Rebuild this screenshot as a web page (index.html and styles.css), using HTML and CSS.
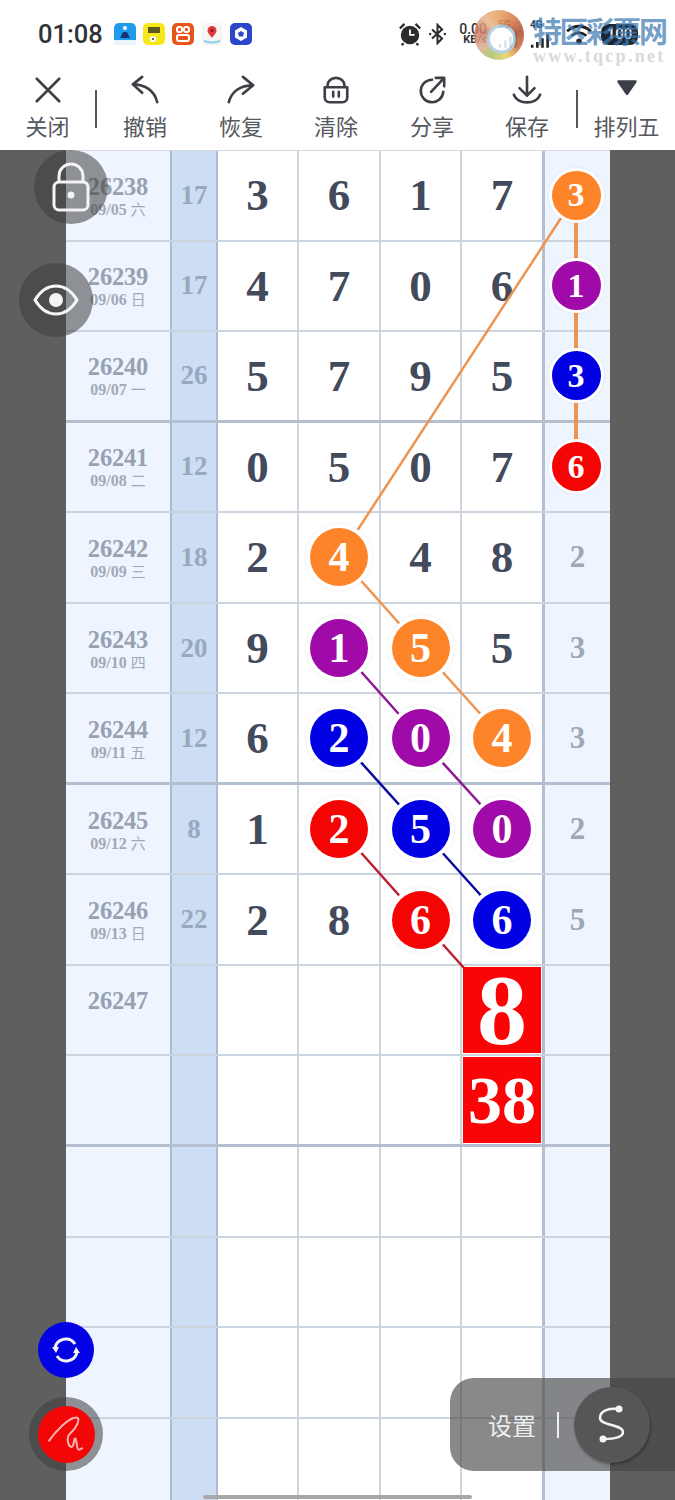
FILE: index.html
```html
<!DOCTYPE html>
<html lang="zh">

<head>
    <meta charset="UTF-8">
    <meta name="viewport" content="width=device-width, initial-scale=1.0">
    <title>排列五</title>
    <link rel="stylesheet" href="styles.css">
</head>

<body>
    <div class="status">
        <span class="time">01:08</span>
        <div class="apps">
            <svg class="app" viewBox="0 0 22 22"><rect width="22" height="22" rx="5" fill="#1e9bea"/><circle cx="11" cy="5" r="2" fill="#fff"/><path d="M6 15l3-6h4l3 6z" fill="#16357c"/><rect y="17" width="22" height="5" fill="#eaf5fb"/></svg>
            <svg class="app" viewBox="0 0 22 22"><rect width="22" height="22" rx="5" fill="#f7e81c"/><rect x="5" y="4" width="12" height="6" fill="#5d5a20"/><circle cx="10" cy="16" r="3" fill="#fff"/><circle cx="10" cy="16" r="1" fill="#333"/></svg>
            <svg class="app" viewBox="0 0 22 22"><rect width="22" height="22" rx="5" fill="#e7541c"/><rect x="5" y="4" width="5" height="5" rx="2" fill="none" stroke="#fff" stroke-width="2"/><rect x="12" y="4" width="5" height="5" rx="2" fill="none" stroke="#fff" stroke-width="2"/><rect x="5" y="12" width="12" height="6" rx="2" fill="none" stroke="#fff" stroke-width="2"/></svg>
            <svg class="app" viewBox="0 0 22 22"><rect width="22" height="22" rx="5" fill="#f4f6f6"/><path d="M11 15C8 11 6.500 9.500 6.500 7.500a4.500 4.500 0 0 1 9 0C15.500 9.500 14 11 11 15z" fill="#e23a3a"/><circle cx="11" cy="7.500" r="1.500" fill="#7d1d1d"/><path d="M3 18q8 3 16 0" stroke="#8fd0e8" stroke-width="2" fill="none"/></svg>
            <svg class="app" viewBox="0 0 22 22"><rect width="22" height="22" rx="5" fill="#2b46c8"/><path d="M11 4l6 3.500v7L11 18l-6-3.500v-7z" fill="#fff"/><path d="M11 8l3 2-1 3.500H9L8 10z" fill="#2b46c8"/></svg>
        </div>
        <div class="sys">
            <svg class="alarm" viewBox="0 0 26 26"><circle cx="13" cy="14" r="10" fill="#2c2c2c"/><path d="M2 7l5-5M24 7l-5-5M6 23l-2 2M20 23l2 2" stroke="#2c2c2c" stroke-width="2.500"/><path d="M13 8v6h5" stroke="#fff" stroke-width="2" fill="none"/></svg>
            <svg class="bt" viewBox="0 0 20 24"><path d="M4 7l11 10-5 5V2l5 5L4 17" stroke="#2c2c2c" stroke-width="2.200" fill="none"/><circle cx="2" cy="12" r="1.300" fill="#2c2c2c"/><circle cx="18" cy="12" r="1.300" fill="#2c2c2c"/></svg>
            <div class="speed"><span>0.00</span><b>KB/s</b></div>
            <div class="net">
                <span>5G</span>
                <svg viewBox="0 0 30 24"><path d="M3 24v-5M10 24V14M17 24V9M24 24V4" stroke="#1c3f63" stroke-width="3.500"/></svg>
            </div>
            <div class="net">
                <span>4G</span>
                <svg viewBox="0 0 30 24"><path d="M3 24v-4M10 24v-8M17 24V11M24 24V6" stroke="#222" stroke-width="3.500"/></svg>
            </div>
            <svg class="wifi" viewBox="0 0 30 24"><path d="M2 9q13-11 26 0M7 14q8-7 16 0" stroke="#222" stroke-width="3" fill="none"/><circle cx="15" cy="20" r="3" fill="#222"/></svg>
            <span class="battery">100</span>
        </div>
    </div>

    <div class="watermark">
        <div class="logo"></div>
        <div class="mark-text">
            <span class="mark-name">特区彩票网</span>
            <span class="mark-url">www.tqcp.net</span>
        </div>
    </div>

    <div class="toolbar">
        <div class="tool">
            <svg viewBox="0 0 32 32"><path d="M4 4l24 24M28 4L4 28"/></svg>
            <span>关闭</span>
        </div>
        <div class="sep"></div>
        <div class="tool">
            <svg viewBox="0 0 32 32"><path d="M13 2L3 10l10 9M3 10c12 0 23 6 26 19"/></svg>
            <span>撤销</span>
        </div>
        <div class="tool">
            <svg viewBox="0 0 32 32"><path d="M18 2l11 9-11 9M29 11C16 11 6 17 3 29"/></svg>
            <span>恢复</span>
        </div>
        <div class="tool">
            <svg viewBox="0 0 32 32"><path d="M4 13h24v11a5 5 0 0 1-5 5H9a5 5 0 0 1-5-5zM7 13V11a9 8 0 0 1 18 0v2M13 18v5M19 18v5"/></svg>
            <span>清除</span>
        </div>
        <div class="tool">
            <svg viewBox="0 0 32 32"><path d="M16 5A12 12 0 1 0 28 18M15 18L29 3M20 3h9v9"/></svg>
            <span>分享</span>
        </div>
        <div class="tool">
            <svg viewBox="0 0 32 32"><path d="M16 2v20M8 14l8 8 8-8M2 21c4 11 24 11 28 0"/></svg>
            <span>保存</span>
        </div>
        <div class="sep sep-end"></div>
        <div class="tool">
            <svg viewBox="0 0 32 32"><path class="solid" d="M7 7h18l-9 13z"/></svg>
            <span>排列五</span>
        </div>
    </div>

    <div class="sheet">
        <div class="board">
            <svg class="links" viewBox="0 0 544 1350">
                <g stroke="#ee9350" stroke-width="2.500">
                    <path d="M510 45L274 407M274 407L355 498M355 498L437 589"/>
                    <path stroke-width="4" d="M510 45V317"/>
                </g>
                <path stroke="#8c1a90" stroke-width="2.500" d="M274 498L355 589L437 679"/>
                <path stroke="#0a0a9e" stroke-width="2.500" d="M274 589L355 679L437 770"/>
                <path stroke="#bb2030" stroke-width="2.500" d="M274 679L355 770L398 818"/>
            </svg>

            <div class="row">
                <div class="date"><b>26238</b><small>09/05 <i>六</i></small></div>
                <div class="sum">17</div>
                <div class="num">3</div><div class="num">6</div><div class="num">1</div><div class="num">7</div>
                <div class="gap"><span class="ball small orange">3</span></div>
            </div>
            <div class="row">
                <div class="date"><b>26239</b><small>09/06 <i>日</i></small></div>
                <div class="sum">17</div>
                <div class="num">4</div><div class="num">7</div><div class="num">0</div><div class="num">6</div>
                <div class="gap"><span class="ball small purple">1</span></div>
            </div>
            <div class="row thick">
                <div class="date"><b>26240</b><small>09/07 <i>一</i></small></div>
                <div class="sum">26</div>
                <div class="num">5</div><div class="num">7</div><div class="num">9</div><div class="num">5</div>
                <div class="gap"><span class="ball small blue">3</span></div>
            </div>
            <div class="row">
                <div class="date"><b>26241</b><small>09/08 <i>二</i></small></div>
                <div class="sum">12</div>
                <div class="num">0</div><div class="num">5</div><div class="num">0</div><div class="num">7</div>
                <div class="gap"><span class="ball small red">6</span></div>
            </div>
            <div class="row">
                <div class="date"><b>26242</b><small>09/09 <i>三</i></small></div>
                <div class="sum">18</div>
                <div class="num">2</div><div class="num"><span class="ball orange">4</span></div><div class="num">4</div><div class="num">8</div>
                <div class="gap">2</div>
            </div>
            <div class="row">
                <div class="date"><b>26243</b><small>09/10 <i>四</i></small></div>
                <div class="sum">20</div>
                <div class="num">9</div><div class="num"><span class="ball purple">1</span></div><div class="num"><span class="ball orange">5</span></div><div class="num">5</div>
                <div class="gap">3</div>
            </div>
            <div class="row thick">
                <div class="date"><b>26244</b><small>09/11 <i>五</i></small></div>
                <div class="sum">12</div>
                <div class="num">6</div><div class="num"><span class="ball blue">2</span></div><div class="num"><span class="ball purple">0</span></div><div class="num"><span class="ball orange">4</span></div>
                <div class="gap">3</div>
            </div>
            <div class="row">
                <div class="date"><b>26245</b><small>09/12 <i>六</i></small></div>
                <div class="sum">8</div>
                <div class="num">1</div><div class="num"><span class="ball red">2</span></div><div class="num"><span class="ball blue">5</span></div><div class="num"><span class="ball purple">0</span></div>
                <div class="gap">2</div>
            </div>
            <div class="row">
                <div class="date"><b>26246</b><small>09/13 <i>日</i></small></div>
                <div class="sum">22</div>
                <div class="num">2</div><div class="num">8</div><div class="num"><span class="ball red">6</span></div><div class="num"><span class="ball blue">6</span></div>
                <div class="gap">5</div>
            </div>
            <div class="row">
                <div class="date next"><b>26247</b></div>
                <div class="sum"></div>
                <div class="num"></div><div class="num"></div><div class="num"></div><div class="num"><span class="tile big">8</span></div>
                <div class="gap"></div>
            </div>
            <div class="row thick">
                <div class="date"></div>
                <div class="sum"></div>
                <div class="num"></div><div class="num"></div><div class="num"></div><div class="num"><span class="tile">38</span></div>
                <div class="gap"></div>
            </div>
            <div class="row">
                <div class="date"></div><div class="sum"></div><div class="num"></div><div class="num"></div><div class="num"></div><div class="num"></div><div class="gap"></div>
            </div>
            <div class="row">
                <div class="date"></div><div class="sum"></div><div class="num"></div><div class="num"></div><div class="num"></div><div class="num"></div><div class="gap"></div>
            </div>
            <div class="row">
                <div class="date"></div><div class="sum"></div><div class="num"></div><div class="num"></div><div class="num"></div><div class="num"></div><div class="gap"></div>
            </div>
            <div class="row">
                <div class="date"></div><div class="sum"></div><div class="num"></div><div class="num"></div><div class="num"></div><div class="num"></div><div class="gap"></div>
            </div>
        </div>
    </div>

    <div class="float lock">
        <svg viewBox="0 0 38 50"><rect x="2" y="20" width="34" height="28" rx="5"/><path d="M7 20v-6a12 12 0 0 1 24 0v6"/><circle class="dot" cx="19" cy="33" r="3.500"/></svg>
    </div>
    <div class="float eye">
        <svg viewBox="0 0 46 32"><path d="M2 16C8 6 15 2 23 2s15 4 21 14c-6 10-13 14-21 14S8 26 2 16z"/><circle class="dot" cx="23" cy="16" r="7"/></svg>
    </div>
    <div class="float refresh">
        <svg viewBox="0 0 30 30"><path d="M4 13a11 11 0 0 1 20-4M26 17a11 11 0 0 1-20 4"/><path class="dot" d="M1 12l7 0-3 6zM29 18l-7 0 3-6z"/></svg>
    </div>
    <div class="float pen">
        <div class="pen-dot">
            <svg viewBox="0 0 50 50"><path d="M6 33C14 22 28 7 36 7C42 7 36 19 30 24C24 29 28 39 31 39C34 39 33 30 35 30C37 30 36 42 39 42C41 42 42 41 43 40"/></svg>
        </div>
    </div>

    <div class="settings">
        <span class="set-text">设置</span>
        <span class="set-sep"></span>
        <div class="set-btn">
            <svg viewBox="0 0 28 40"><path d="M21 4C12 3 2 5 2 13C2 21 25 19 25 27C25 33 14 34 5 34"/><circle class="dot" cx="21" cy="4" r="3.500"/><circle class="dot" cx="5" cy="34" r="3.500"/></svg>
        </div>
    </div>

    <div class="home-bar"></div>
</body>

</html>
```

FILE: styles.css
```css
* {
    box-sizing: border-box;
}

html,
body {
    margin: 0;
    height: 1500px;
    overflow: hidden;
    background-color: #fff;
    font-family: "Noto Sans CJK SC", "Noto Sans", sans-serif;
}

body {
    position: relative;
}

/* status bar */
.status {
    height: 68px;
    display: flex;
    align-items: center;
    padding: 0 37px 0 38px;
}

.time {
    font-family: Roboto, sans-serif;
    font-weight: 500;
    font-size: 25.5px;
    color: #2f3237;
}

.apps {
    display: flex;
    gap: 7px;
    margin-left: 11px;
}

.app {
    width: 22px;
    height: 22px;
}

.sys {
    margin-left: auto;
    display: flex;
    align-items: center;
}

.alarm {
    width: 24px;
    height: 24px;
}

.bt {
    width: 19px;
    height: 22px;
    margin-left: 6px;
}

.speed {
    display: flex;
    flex-direction: column;
    align-items: flex-end;
    margin-left: 8px;
    width: 32px;
    font-family: Roboto, sans-serif;
    line-height: 10px;
    color: #333;
}

.speed span {
    font-size: 14px;
    font-weight: 500;
}

.speed b {
    font-size: 11px;
    margin-top: 1px;
}

.net {
    width: 22px;
    margin-left: 11px;
    display: flex;
    flex-direction: column;
    font-family: Roboto, sans-serif;
    font-size: 10px;
    font-weight: 700;
    line-height: 10px;
    color: #1c3f63;
}

.net + .net {
    margin-left: 10px;
}

.net svg {
    width: 22px;
    height: 18px;
}

.wifi {
    width: 30px;
    height: 22px;
    margin-left: 12px;
}

.battery {
    width: 37px;
    height: 21px;
    margin-left: 7px;
    border-radius: 8px;
    background-color: #1d2630;
    color: #fff;
    text-align: center;
    font-family: Roboto, sans-serif;
    font-size: 15px;
    font-weight: 500;
    line-height: 21px;
}

/* site watermark */
.watermark {
    position: absolute;
    left: 474px;
    top: 10px;
    display: flex;
    pointer-events: none;
}

.logo {
    width: 50px;
    height: 50px;
    border-radius: 50%;
    opacity: .85;
    background: radial-gradient(circle at 55% 58%, #fff 0 11px, #a8cbe0 12px 14px, transparent 15px), conic-gradient(#e8a060, #d97a45, #a84a30, #c9683f, #e8d060, #a9c46a, #e0a890, #cf7d64, #e8b48a, #e8a060);
}

.mark-text {
    display: flex;
    flex-direction: column;
    margin-left: 9px;
    width: 136px;
}

.mark-name {
    height: 38px;
    padding-top: 3px;
    font-size: 29px;
    font-weight: 700;
    line-height: 34px;
    letter-spacing: -2.500px;
    color: rgba(62, 122, 178, .72);
    white-space: nowrap;
}

.mark-url {
    font-family: "Liberation Serif", serif;
    font-weight: 700;
    font-size: 18px;
    line-height: 16px;
    letter-spacing: 2.300px;
    color: #d6dadd;
    white-space: nowrap;
}

/* toolbar */
.toolbar {
    height: 82px;
    display: grid;
    grid-template-columns: 95px 2px 96px 96px 94px 98px 92px 5px 1fr;
}

.tool {
    display: flex;
    flex-direction: column;
    align-items: center;
    padding-top: 7px;
}

.tool svg {
    width: 30px;
    height: 30px;
    fill: none;
    stroke: #3c3f46;
    stroke-width: 2.800;
    stroke-linecap: round;
    stroke-linejoin: round;
}

.tool .solid {
    fill: #3c3f46;
}

.tool span {
    margin-top: 5px;
    font-size: 22px;
    line-height: 30px;
    color: #55585e;
    white-space: nowrap;
}

.sep {
    width: 2px;
    height: 38px;
    margin-top: 22px;
    background-color: #55585e;
}

.sep-end {
    justify-self: end;
}

/* chart */
.sheet {
    height: 1350px;
    background-color: #5f5f5f;
    padding: 0 65px 0 66px;
    overflow: hidden;
}

.board {
    position: relative;
    border-top: 1px solid #d5d9df;
}

.links {
    position: absolute;
    left: 0;
    top: -1px;
    width: 544px;
    height: 1350px;
    z-index: 1;
}

.links path {
    fill: none;
}

.row {
    height: 90.550px;
    display: grid;
    grid-template-columns: 106px 46px 81px 82px 81px 83px 1fr;
    border-bottom: 2px solid #ccd4df;
}

.row.thick {
    border-bottom: 3px solid #b4c0cf;
}

.row > div {
    display: flex;
    align-items: center;
    justify-content: center;
    font-family: "Liberation Serif", serif;
    font-weight: 700;
}

.date {
    flex-direction: column;
    padding-top: 3px;
    background-color: #eff5fe;
    border-right: 2px solid #afbbcc;
    color: #98a1b1;
}

.date b {
    font-size: 24.500px;
    line-height: 25px;
    letter-spacing: -.200px;
}

.date small {
    font-size: 16px;
    line-height: 20px;
    color: #a1aab8;
}

.date i {
    font-family: "Noto Sans CJK SC", sans-serif;
    font-style: normal;
    font-weight: 400;
    font-size: 15px;
}

.row > .date.next {
    justify-content: flex-start;
    padding-top: 22px;
}

.sum {
    background-color: #ccddf4;
    border-right: 2px solid #afbbcc;
    font-size: 27px;
    color: #98a8bf;
}

.num {
    background-color: #fff;
    border-right: 2px solid #cdd4de;
    font-size: 45px;
    color: #434a5c;
}

.num:nth-child(6) {
    border-right: 3px solid #b4c0cf;
}

.gap {
    background-color: #eff5fe;
    font-size: 31px;
    color: #9ea8b6;
}

.gap .ball {
    margin-right: 3px;
}

/* number balls, above the link lines */
.ball {
    position: relative;
    z-index: 2;
    width: 58px;
    height: 58px;
    flex: none;
    display: flex;
    align-items: center;
    justify-content: center;
    border-radius: 50%;
    color: #fff;
    font-size: 42px;
    line-height: 1;
    box-shadow: 0 0 0 4px #fff, 0 0 3px 5px rgba(0, 0, 0, .05);
}

.ball.small {
    width: 49px;
    height: 49px;
    font-size: 34px;
    box-shadow: 0 0 0 3px #fff, 0 0 2px 4px rgba(0, 0, 0, .04);
}

.orange {
    background-color: #fd8428;
}

.purple {
    background-color: #a00aa8;
}

.blue {
    background-color: #0000e2;
}

.red {
    background-color: #f50404;
}

.tile {
    position: relative;
    z-index: 2;
    width: 78px;
    height: 86px;
    display: flex;
    align-items: center;
    justify-content: center;
    background-color: #f90505;
    color: #fff;
    font-size: 68px;
    line-height: 1;
}

.tile.big {
    font-size: 100px;
}

/* floating controls */
.float {
    position: absolute;
    z-index: 3;
    width: 74px;
    height: 74px;
    border-radius: 50%;
    display: flex;
    align-items: center;
    justify-content: center;
    background-color: rgba(60, 60, 60, .55);
}

.float svg {
    fill: none;
    stroke: #f4f4f4;
    stroke-width: 3;
}

.float .dot {
    fill: #f4f4f4;
    stroke: none;
}

.lock {
    left: 34px;
    top: 150px;
}

.lock svg {
    width: 38px;
    height: 50px;
}

.eye {
    left: 19px;
    top: 263px;
}

.eye svg {
    width: 46px;
    height: 32px;
}

.refresh {
    left: 38px;
    top: 1322px;
    width: 56px;
    height: 56px;
    background-color: #0202e4;
}

.refresh svg {
    width: 30px;
    height: 30px;
}

.pen {
    left: 29px;
    top: 1397px;
}

.pen-dot {
    width: 57px;
    height: 57px;
    border-radius: 50%;
    display: flex;
    align-items: center;
    justify-content: center;
    background-color: #f20606;
}

.pen-dot svg {
    width: 46px;
    height: 46px;
    stroke: #f8b4b4;
    stroke-width: 2.200;
}

.settings {
    position: absolute;
    z-index: 3;
    left: 450px;
    top: 1378px;
    width: 225px;
    height: 93px;
    display: flex;
    align-items: center;
    padding-left: 38px;
    border-radius: 24px 0 0 24px;
    background-color: rgba(68, 68, 68, .63);
}

.set-text {
    font-size: 24px;
    color: #eee;
}

.set-sep {
    width: 2px;
    height: 26px;
    margin-left: 21px;
    background-color: #eee;
}

.set-btn {
    width: 76px;
    height: 76px;
    margin-left: 15px;
    border-radius: 50%;
    display: flex;
    align-items: center;
    justify-content: center;
    background-color: #565656;
    box-shadow: 1px 2px 3px rgba(0, 0, 0, .3);
}

.set-btn svg {
    width: 28px;
    height: 40px;
    fill: none;
    stroke: #f4f4f4;
    stroke-width: 2.500;
}

.set-btn .dot {
    fill: #f4f4f4;
    stroke: none;
}

.home-bar {
    position: absolute;
    z-index: 3;
    left: 203px;
    top: 1495px;
    width: 269px;
    height: 4px;
    border-radius: 2px;
    background-color: #a8a8a8;
}
```
